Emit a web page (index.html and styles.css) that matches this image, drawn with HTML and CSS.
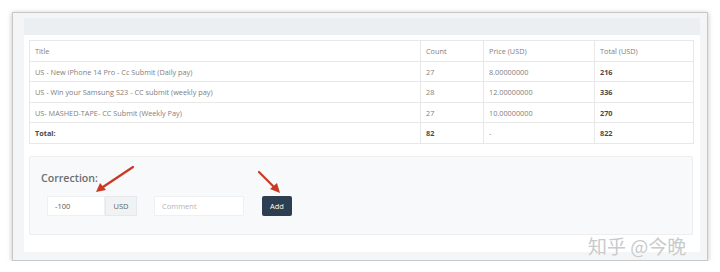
FILE: index.html
```html
<!DOCTYPE html>
<html>
<head>
<meta charset="utf-8">
<link rel="stylesheet" href="styles.css">
</head>
<body>
<div class="frame">
  <div class="panel">
    <div class="panel-head"></div>
    <div class="panel-body">
      <table class="stats">
        <colgroup>
          <col class="c-title"><col class="c-count"><col class="c-price"><col class="c-total">
        </colgroup>
        <tr><td>Title</td><td>Count</td><td>Price (USD)</td><td>Total (USD)</td></tr>
        <tr><td>US - New iPhone 14 Pro - Cc Submit (Daily pay)</td><td>27</td><td>8.00000000</td><td class="b">216</td></tr>
        <tr><td>US - Win your Samsung S23 - CC submit (weekly pay)</td><td>28</td><td>12.00000000</td><td class="b">336</td></tr>
        <tr><td>US- MASHED-TAPE- CC Submit (Weekly Pay)</td><td>27</td><td>10.00000000</td><td class="b">270</td></tr>
        <tr><td class="b">Total:</td><td class="b">82</td><td>-</td><td class="b">822</td></tr>
      </table>
      <div class="correction">
        <div class="corr-title">Correction:</div>
        <div class="corr-row">
          <div class="input-group">
            <div class="field amount">-100</div>
            <div class="addon">USD</div>
          </div>
          <div class="field comment">Comment</div>
          <div class="btn">Add</div>
        </div>
        <svg class="arrows" width="664" height="79" viewBox="0 0 664 79">
          <g stroke="#c93a26" stroke-width="2.2" stroke-linecap="round" fill="none">
            <line x1="104" y1="11" x2="74" y2="31"/>
            <line x1="230" y1="16" x2="245" y2="31"/>
          </g>
          <g fill="#c93a26">
            <polygon points="67,36 71,27 77,34"/>
            <polygon points="251,37 241,33 248,27"/>
          </g>
        </svg>
      </div>
    </div>
  </div>
  <div class="watermark">知乎 @今晚</div>
</div>
</body>
</html>
```
FILE: styles.css
```css
html, body {
  margin: 0;
  padding: 0;
  background: #ffffff;
}
body {
  font-family: "Open Sans", "Noto Sans", sans-serif;
}
.frame {
  position: relative;
  box-sizing: border-box;
  width: 696px;
  height: 249px;
  margin: 12px 0 0 12px;
  border: 1px solid #c6c8ca;
  box-shadow: 0 1px 5px rgba(0, 0, 0, 0.25);
  background: #f3f5f6;
  padding: 5px 7px 8px 11px;
}
.panel {
  background: #ffffff;
  height: 234px;
}
.panel-head {
  height: 17px;
  background: #eceff1;
}
.panel-body {
  padding: 5px 7px 18px 5px;
}
.stats {
  width: 664px;
  border-collapse: collapse;
  table-layout: fixed;
  font-size: 7.3px;
  color: #808080;
  border: 1px solid #e3e4e4;
}
.c-title { width: 391px; }
.c-count { width: 63px; }
.c-price { width: 111px; }
.c-total { width: 99px; }
.stats td {
  border: 1px solid #e8e8e8;
  height: 19px;
  padding: 0 5px;
  line-height: 10px;
  white-space: nowrap;
}
.stats tr:nth-child(odd) td { height: 20px; }
.stats td.b {
  font-weight: 700;
  color: #4a4a4a;
}
.correction {
  position: relative;
  box-sizing: border-box;
  margin-top: 12px;
  height: 79px;
  background: #f7f9fa;
  border: 1px solid #eceef0;
  border-radius: 2px;
  padding: 13px 0 0 11px;
}
.corr-title {
  font-size: 10.6px;
  font-weight: 600;
  color: #6e6e6e;
  line-height: 16px;
  height: 16px;
}
.corr-row {
  display: flex;
  align-items: center;
  margin-top: 10px;
  padding-left: 6px;
}
.input-group {
  display: flex;
}
.field {
  box-sizing: border-box;
  height: 20px;
  background: #ffffff;
  border: 1px solid #eef0f1;
  font-size: 7.5px;
  line-height: 18px;
  padding: 0 7px;
}
.amount {
  width: 58px;
  color: #555;
}
.addon {
  box-sizing: border-box;
  width: 32px;
  height: 20px;
  background: #f0f2f3;
  border: 1px solid #e6e8ea;
  font-size: 7.5px;
  line-height: 18px;
  color: #666;
  text-align: center;
}
.comment {
  width: 90px;
  margin-left: 17px;
  color: #b4b4b4;
}
.btn {
  box-sizing: border-box;
  width: 30px;
  height: 20px;
  margin-left: 18px;
  background: #2c3e50;
  border-radius: 2px;
  color: #ffffff;
  font-size: 7.5px;
  line-height: 20px;
  text-align: center;
}
.arrows {
  position: absolute;
  left: -1px;
  top: -1px;
}
.watermark {
  position: absolute;
  left: 575px;
  top: 222px;
  font-family: "Noto Sans CJK SC", sans-serif;
  font-size: 19px;
  line-height: 22px;
  color: #c8cacc;
  text-shadow: 0 0 1px #ffffff, 0 0 1px #ffffff;
  white-space: nowrap;
}
```
